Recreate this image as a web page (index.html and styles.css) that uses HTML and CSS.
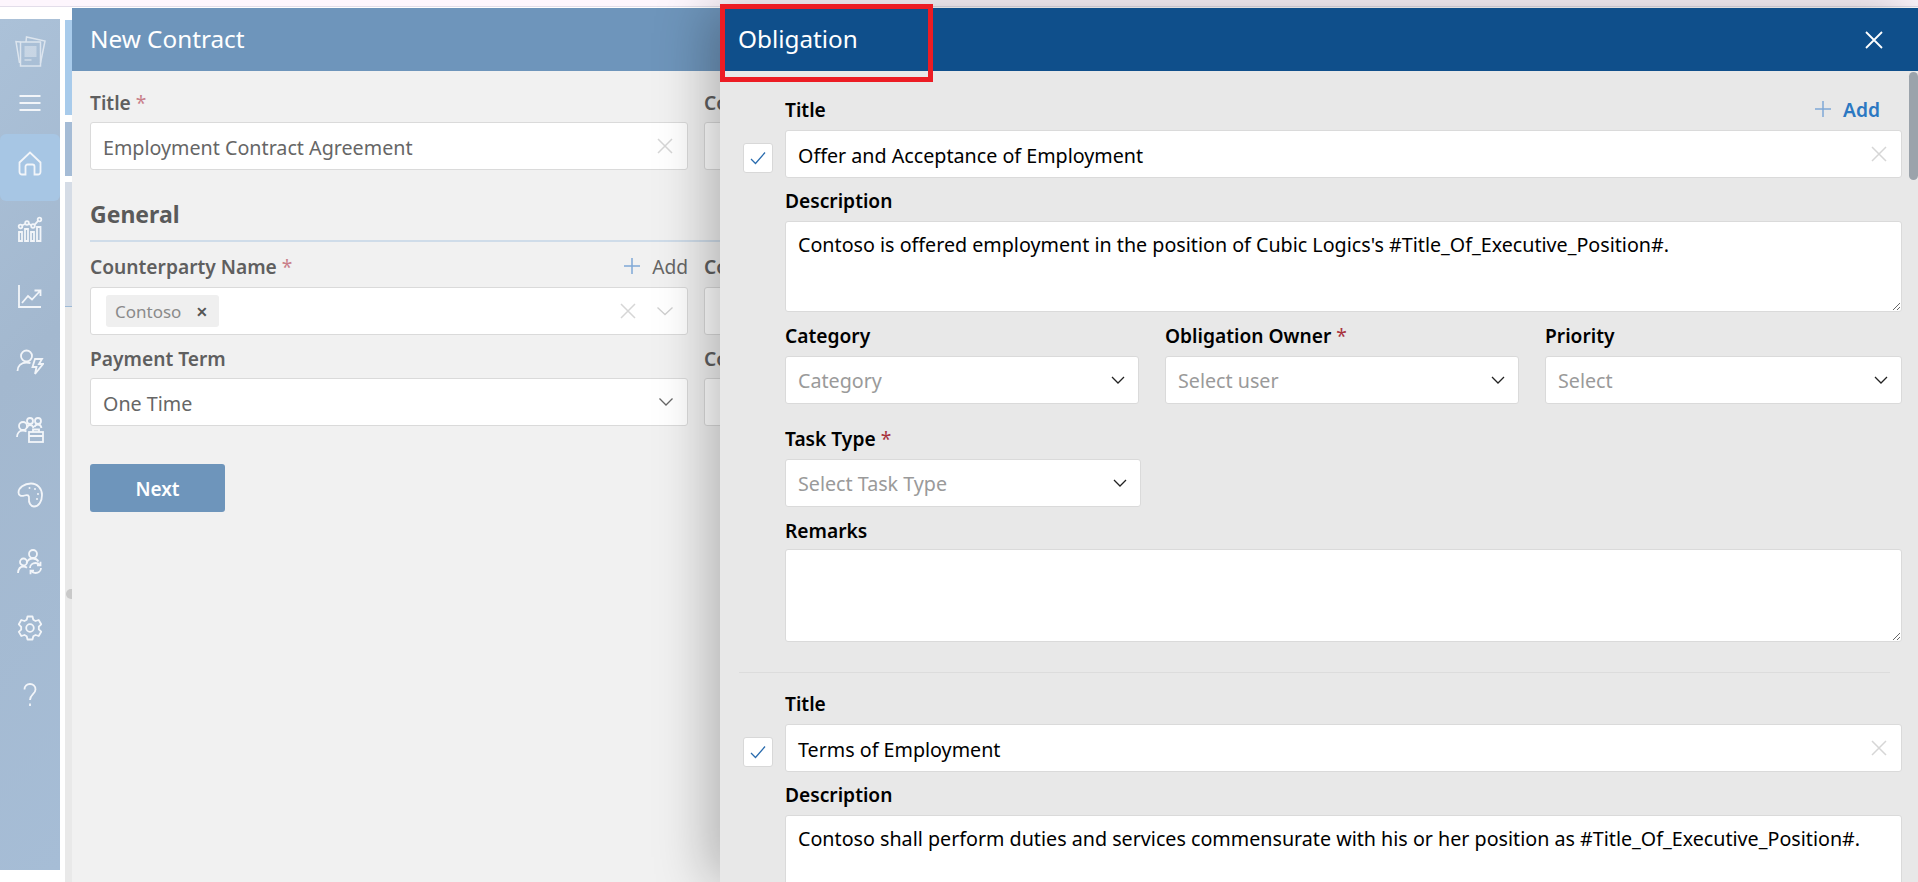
FILE: index.html

```html
<!DOCTYPE html>
<html lang="en">
<head>
    <meta charset="UTF-8">
    <meta name="viewport" content="width=device-width, initial-scale=1.0">
    <title>New Contract - Obligation</title>
    <link rel="stylesheet" href="styles.css">
</head>
<body>

<div class="topstrip"></div>

<div class="app">
    <nav class="sidebar">
        <div class="nav-logo">
            <svg class="ico-soft" width="32" height="32" viewBox="0 0 32 32">
                <path d="M6.500 6L2 5.500l3.500 21.500"/>
                <path d="M12 6l.500-5L31 5l-4.500 22"/>
                <rect x="6.500" y="6" width="20" height="24"/>
                <path class="fillbars" d="M10.500 10h12v11h-12zM10.500 23h7v2h-7z"/>
            </svg>
        </div>
        <div class="nav-item nav-menu">
            <svg width="24" height="18" viewBox="0 0 24 18"><path d="M1.500 2h21M1.500 9h21M1.500 16h21"/></svg>
        </div>
        <div class="nav-item active">
            <svg width="26" height="26" viewBox="0 0 26 26"><path d="M2.500 12.500L13 2.500l10.500 10v9.500a2.500 2.500 0 0 1-2.500 2.500h-3.500v-8a2 2 0 0 0-2-2h-5a2 2 0 0 0-2 2v8H5a2.500 2.500 0 0 1-2.500-2.500z"/></svg>
        </div>
        <div class="nav-item">
            <svg width="26" height="26" viewBox="0 0 26 26"><path d="M2 16h3v9H2zM8 13h3v12H8zM14 16h3v9h-3zM20 11h3.500v14H20z"/><circle cx="3.500" cy="10.500" r="1.800"/><circle cx="10" cy="7" r="1.800"/><circle cx="16" cy="10" r="1.800"/><circle cx="22.500" cy="3.500" r="1.800"/><path d="M5 9.500l3.500-1.800M11.700 7.800l2.600 1.400M17.500 8.800l3.600-4"/></svg>
        </div>
        <div class="nav-item">
            <svg width="26" height="26" viewBox="0 0 26 26"><path d="M2 2v22h22M5 20l6-7 4 3.500L23 8M17.500 7.500h6v5.500"/></svg>
        </div>
        <div class="nav-item">
            <svg width="28" height="28" viewBox="0 0 28 28"><circle cx="10.500" cy="8" r="5.500"/><path d="M1.500 23c0-5 3.500-8.500 9-8.500 1.500 0 3 .3 4 .8"/><path d="M19 11h7l-3 5h4l-8 10 1.500-7h-4z"/></svg>
        </div>
        <div class="nav-item">
            <svg width="28" height="28" viewBox="0 0 28 28"><circle cx="7" cy="11" r="4"/><path d="M1 22c0-4 2.500-6.500 6-6.500 1.500 0 2.500.4 3.500 1"/><circle cx="14" cy="6" r="3"/><circle cx="22" cy="6" r="3"/><path d="M11 13c.5-2 1.500-3 3-3s3 1 3.500 3M18.500 12c.5-1.500 2-2.500 3.500-2.500s3 1 3.500 3.500"/><rect x="13" y="17" width="14" height="10"/><path d="M17 17v-2.500h6V17M13 21h14M20 20v2"/></svg>
        </div>
        <div class="nav-item">
            <svg width="26" height="26" viewBox="0 0 26 26"><path d="M14 1.500C7 1.500 1.500 6 1.500 10.500c0 3.500 3 4 6 3s5-.5 4.500 3.500c-.5 3.500 1.500 7.500 5 7.500 5 0 8-5.500 8-11.500C25 6.500 20.500 1.500 14 1.500z"/><circle class="dot" cx="12.500" cy="6" r="1"/><circle class="dot" cx="18" cy="7" r="1"/><circle class="dot" cx="21" cy="12" r="1"/><circle class="dot" cx="20" cy="17" r="1"/></svg>
        </div>
        <div class="nav-item">
            <svg width="26" height="26" viewBox="0 0 26 26"><circle cx="16" cy="5" r="4"/><path d="M9.500 14c1-3 3.500-4.500 6.500-4.500 2.500 0 4.500 1.200 5.500 3"/><circle cx="6.500" cy="13" r="3.500"/><path d="M1 24c.3-4 2.500-6.500 5.500-6.500 1.500 0 2.500.5 3.500 1.200"/><path d="M13 19c0-3 2.500-5 5.500-5 1.800 0 3.300.8 4.300 2M24 19c0 3-2.500 5-5.500 5-1.800 0-3.300-.8-4.300-2M23.500 12.800v3.500H20M13.500 25.200v-3.500H17"/></svg>
        </div>
        <div class="nav-item">
            <svg width="26" height="26" viewBox="0 0 26 26"><path d="M10.500 1.500h5l.8 3.300 2.200 1.200 3.200-1 2.500 4.300-2.400 2.300v2.800l2.400 2.300-2.500 4.300-3.200-1-2.200 1.200-.8 3.300h-5l-.8-3.300-2.200-1.200-3.200 1L1.800 16.900l2.400-2.300v-2.800L1.800 9.300l2.500-4.300 3.200 1 2.200-1.200z" stroke-linejoin="round"/><circle cx="13" cy="13" r="3.800"/></svg>
        </div>
        <div class="nav-item">
            <svg width="14" height="24" viewBox="0 0 14 24"><path d="M1.500 6.500C1.500 3 4 1 7 1s5.500 2 5.500 5.500c0 4.500-5.500 5-5.500 10.500"/><path d="M7 20.500v2.500"/></svg>
        </div>
    </nav>

    <div class="backdrop">
        <div class="back-a"></div>
        <div class="back-b"></div>
        <div class="back-c"></div>
        <div class="back-d"></div>
        <div class="back-thumb"></div>
    </div>
</div>

<!-- first drawer, mostly covered by the obligation one -->
<section class="drawer drawer-contract">
    <header class="drawer-head">New Contract</header>
    <div class="contract-body">
        <div class="contract-col">
            <div class="label-row first-row"><label>Title <span class="req">*</span></label></div>
            <div class="field">
                <span class="field-text">Employment Contract Agreement</span>
                <svg class="x-icon" width="16" height="16" viewBox="0 0 16 16"><path d="M1 1l14 14M15 1L1 15"/></svg>
            </div>

            <h2 class="section-title">General</h2>

            <div class="label-row general-row">
                <label>Counterparty Name <span class="req">*</span></label>
                <span class="add-link">
                    <svg width="18" height="18" viewBox="0 0 18 18"><path d="M9 1v16M1 9h16"/></svg>Add
                </span>
            </div>
            <div class="field field-chips">
                <span class="chip">Contoso <b class="chip-x">&#10005;</b></span>
                <span class="field-text"></span>
                <svg class="x-icon x-gap" width="16" height="16" viewBox="0 0 16 16"><path d="M1 1l14 14M15 1L1 15"/></svg>
                <svg class="chev chev-light" width="18" height="10" viewBox="0 0 18 10"><path d="M1.500 1.500L9 8.500l7.500-7"/></svg>
            </div>

            <div class="label-row term-row"><label>Payment Term</label></div>
            <div class="field">
                <span class="field-text">One Time</span>
                <svg class="chev chev-mid" width="16" height="10" viewBox="0 0 16 10"><path d="M1.500 1.500L8 8l6.500-6.500"/></svg>
            </div>

            <button class="btn-next">Next</button>
        </div>
        <div class="contract-col2">
            <div class="label-row first-row"><label>Co</label></div>
            <div class="field"></div>
            <div class="spacer-general"></div>
            <div class="label-row general-row"><label>Co</label></div>
            <div class="field"></div>
            <div class="label-row term-row"><label>Co</label></div>
            <div class="field"></div>
        </div>
    </div>
</section>

<section class="drawer drawer-obligation">
    <header class="drawer-head">
        <span>Obligation</span>
        <svg class="close-icon" width="18" height="18" viewBox="0 0 18 18"><path d="M1 1l16 16M17 1L1 17"/></svg>
    </header>
    <div class="callout"></div>

    <div class="ob-scroll">
        <div class="ob-thumb"></div>

        <div class="ob-item">
            <div class="ob-check">
                <span class="checkbox"><svg width="16" height="14" viewBox="0 0 16 14"><path d="M1 8l4.500 4.500L15 1.500"/></svg></span>
            </div>
            <div class="ob-fields">
                <div class="label-row ob-label">
                    <label>Title</label>
                    <span class="add-link">
                        <svg width="18" height="18" viewBox="0 0 18 18"><path d="M9 1v16M1 9h16"/></svg>Add
                    </span>
                </div>
                <div class="field">
                    <span class="field-text">Offer and Acceptance of Employment</span>
                    <svg class="x-icon" width="16" height="16" viewBox="0 0 16 16"><path d="M1 1l14 14M15 1L1 15"/></svg>
                </div>
                <div class="label-row ob-label"><label>Description</label></div>
                <textarea class="area area-desc" readonly>Contoso is offered employment in the position of Cubic Logics's #Title_Of_Executive_Position#.</textarea>

                <div class="ob-row">
                    <div class="ob-cell">
                        <div class="label-row ob-label"><label>Category</label></div>
                        <div class="field">
                            <span class="field-text ph">Category</span>
                            <svg class="chev" width="14" height="8" viewBox="0 0 14 8"><path d="M1 1l6 6 6-6"/></svg>
                        </div>
                    </div>
                    <div class="ob-cell">
                        <div class="label-row ob-label"><label>Obligation Owner <span class="req">*</span></label></div>
                        <div class="field">
                            <span class="field-text ph">Select user</span>
                            <svg class="chev" width="14" height="8" viewBox="0 0 14 8"><path d="M1 1l6 6 6-6"/></svg>
                        </div>
                    </div>
                    <div class="ob-cell">
                        <div class="label-row ob-label"><label>Priority</label></div>
                        <div class="field">
                            <span class="field-text ph">Select</span>
                            <svg class="chev" width="14" height="8" viewBox="0 0 14 8"><path d="M1 1l6 6 6-6"/></svg>
                        </div>
                    </div>
                </div>

                <div class="task-cell">
                    <div class="label-row ob-label"><label>Task Type <span class="req">*</span></label></div>
                    <div class="field">
                        <span class="field-text ph">Select Task Type</span>
                        <svg class="chev" width="14" height="8" viewBox="0 0 14 8"><path d="M1 1l6 6 6-6"/></svg>
                    </div>
                </div>

                <div class="label-row ob-label remarks-label"><label>Remarks</label></div>
                <textarea class="area area-remarks" readonly></textarea>
            </div>
        </div>

        <hr class="ob-divider">

        <div class="ob-item">
            <div class="ob-check">
                <span class="checkbox"><svg width="16" height="14" viewBox="0 0 16 14"><path d="M1 8l4.500 4.500L15 1.500"/></svg></span>
            </div>
            <div class="ob-fields">
                <div class="label-row ob-label"><label>Title</label></div>
                <div class="field">
                    <span class="field-text">Terms of Employment</span>
                    <svg class="x-icon" width="16" height="16" viewBox="0 0 16 16"><path d="M1 1l14 14M15 1L1 15"/></svg>
                </div>
                <div class="label-row ob-label"><label>Description</label></div>
                <textarea class="area area-desc" readonly>Contoso shall perform duties and services commensurate with his or her position as #Title_Of_Executive_Position#.</textarea>
            </div>
        </div>
    </div>
</section>

</body>
</html>
```

FILE: styles.css

```css
* {
    box-sizing: border-box;
}
html, body {
    height: 100%;
}
body {
    margin: 0;
    overflow: hidden;
    background-color: #fff;
    font-family: "Noto Sans", "Open Sans", Arial, sans-serif;
    font-size: 19.700px;
    color: #000;
}
.topstrip {
    height: 7px;
    background-color: #fdf6fd;
    border-bottom: 1px solid #e3deea;
}

/* app behind the drawers */
.app {
    display: flex;
    padding-top: 12px;
    height: 875px;
}
.sidebar {
    width: 60px;
    height: 851px;
    flex: none;
    display: flex;
    flex-direction: column;
    align-items: stretch;
    background: linear-gradient(135deg, #abc1d8 0%, #a3b8cf 40%, #a6bdd6 100%);
}
.sidebar svg {
    fill: none;
    stroke: #f2f5f9;
    stroke-width: 1.800;
}
.nav-logo {
    height: 66px;
    display: flex;
    align-items: center;
    justify-content: center;
    flex: none;
}
.sidebar .ico-soft {
    opacity: .7;
    stroke-width: 1.500;
}
.sidebar svg .fillbars {
    fill: rgba(255, 255, 255, .5);
    stroke: none;
}
.sidebar svg .dot {
    fill: #f2f5f9;
    stroke: none;
}
.nav-item {
    height: 66.500px;
    padding-bottom: 9px;
    flex: none;
    display: flex;
    align-items: center;
    justify-content: center;
}
.nav-menu {
    height: 49px;
    padding-bottom: 13px;
}
.nav-item.active {
    background-color: #a7c6e4;
    border-radius: 6px;
}
.backdrop {
    position: relative;
    flex: 1;
    background-color: #fff;
}
.back-a, .back-b, .back-c, .back-d {
    position: absolute;
    left: 5px;
    width: 12px;
}
.back-a {
    top: 1px;
    height: 95px;
    background-color: #a8cbeb;
}
.back-b {
    top: 103px;
    height: 54px;
    background-color: #a5bcd6;
}
.back-c {
    top: 163px;
    height: 125px;
    background-color: #d5dce6;
    border-bottom: 1px solid #9ebad6;
}
.back-d {
    top: 288px;
    height: 600px;
    background-color: #e9e9e9;
}
.back-thumb {
    position: absolute;
    left: 6px;
    top: 570px;
    width: 12px;
    height: 10px;
    border-radius: 5px;
    background-color: #c9c9c9;
}

/* drawers */
.drawer {
    position: absolute;
    top: 8px;
    bottom: 0;
    right: 0;
}
.drawer-contract {
    left: 72px;
    background-color: #f1f1f1;
    color: #666;
}
.drawer-obligation {
    left: 720px;
    background-color: #e8e8e8;
    box-shadow: -12px 0 50px rgba(0, 0, 0, .26);
}
.drawer-head {
    height: 63px;
    display: flex;
    align-items: center;
    justify-content: space-between;
    padding: 0 18px 2px;
    font-size: 24.300px;
    color: #fff;
}
.drawer-contract .drawer-head {
    background-color: #6e95bb;
}
.drawer-obligation .drawer-head {
    background-color: #0f4f8b;
    padding-left: 18px;
    padding-right: 35px;
}
.close-icon {
    fill: none;
    stroke: #fff;
    stroke-width: 1.800;
    margin-top: 2px;
}
.callout {
    position: absolute;
    left: 0;
    top: -4px;
    width: 213px;
    height: 78px;
    border: 5px solid #ec1c24;
}

/* shared form bits */
label {
    font-size: 19.200px;
    font-weight: 600;
    white-space: nowrap;
}
.drawer-contract label {
    color: #5f5f5f;
}
.req {
    color: #a8333d;
    font-weight: 400;
}
.drawer-contract .req {
    color: #c9808a;
}
.label-row {
    display: flex;
    align-items: center;
    justify-content: space-between;
}
.field {
    height: 48px;
    display: flex;
    align-items: center;
    gap: 10px;
    padding: 0 12px;
    background-color: #fff;
    border: 1px solid #dadada;
    border-radius: 3px;
}
.field-text {
    flex: 1;
    padding-top: 2px;
    white-space: nowrap;
}
.ph {
    padding-top: 0;
    color: #9a9a9a;
}
.x-icon {
    fill: none;
    stroke: #d6d6d6;
    stroke-width: 1.500;
    flex: none;
    margin-right: 2px;
}
.x-gap {
    margin-right: 14px;
}
.chev {
    fill: none;
    stroke: #222;
    stroke-width: 1.300;
    flex: none;
    margin-right: 1px;
}
.chev-light {
    stroke: #cfcfcf;
}
.chev-mid {
    stroke: #666;
}
.add-link {
    display: flex;
    align-items: center;
    gap: 11px;
    font-size: 19.200px;
}
.add-link svg {
    fill: none;
    stroke: #7fa8d6;
    stroke-width: 1.500;
}

/* new contract form */
.contract-body {
    display: flex;
    gap: 16px;
    padding: 13px 0 0 18px;
    overflow: hidden;
    height: 600px;
}
.contract-col {
    width: 598px;
    flex: none;
}
.contract-col2 {
    flex: none;
    width: 500px;
}
.first-row {
    height: 38px;
    padding-bottom: 2px;
}
.general-row {
    height: 45px;
    padding-top: 3px;
}
.term-row {
    height: 43px;
    padding-top: 3px;
}
.section-title {
    margin: 0;
    height: 72px;
    padding-top: 29px;
    line-height: 30px;
    font-size: 23px;
    font-weight: 700;
    color: #5a5a5a;
    border-bottom: 2px solid #cfdce9;
    width: 640px;
}
.spacer-general {
    height: 72px;
}
.field-chips {
    gap: 6px;
    padding-left: 15px;
}
.chip {
    flex: none;
    display: flex;
    align-items: center;
    justify-content: space-between;
    width: 113px;
    height: 32px;
    padding: 0 11px 0 9px;
    background-color: #efefef;
    border-radius: 3px;
    font-size: 17px;
    color: #8a8a8a;
}
.chip-x {
    font-size: 14px;
    color: #555;
}
.btn-next {
    display: block;
    width: 135px;
    height: 48px;
    margin-top: 38px;
    padding-top: 2px;
    background-color: #6e95bb;
    color: #fff;
    border: 0;
    border-radius: 3px;
    font: 600 19px "Noto Sans", Arial, sans-serif;
}

/* obligation list */
.ob-scroll {
    position: relative;
    padding: 16px 16px 0 23px;
}
.ob-thumb {
    position: absolute;
    right: 0;
    top: 1px;
    width: 9px;
    height: 108px;
    border-radius: 5px;
    background-color: #9ba3ab;
}
.ob-item {
    display: flex;
    gap: 12px;
}
.ob-check {
    width: 30px;
    flex: none;
    padding-top: 56px;
}
.checkbox {
    display: flex;
    align-items: center;
    justify-content: center;
    width: 30px;
    height: 30px;
    background-color: #fff;
    border: 1px solid #d8d8d8;
    border-radius: 3px;
}
.checkbox svg {
    fill: none;
    stroke: #2a6cae;
    stroke-width: 1.300;
}
.ob-fields {
    flex: 1;
    min-width: 0;
}
.ob-label {
    height: 43px;
    padding-top: 1px;
}
.ob-label .add-link {
    color: #2b78c2;
    font-weight: 600;
    margin-right: 22px;
}
.area {
    display: block;
    width: 100%;
    padding: 9px 12px;
    background-color: #fff;
    border: 1px solid #dadada;
    border-radius: 3px;
    font: 19.700px "Noto Sans", Arial, sans-serif;
    color: #000;
    outline: none;
}
.area-desc {
    height: 91px;
}
.area-remarks {
    height: 93px;
}
.ob-row {
    display: grid;
    grid-template-columns: 354px 354px 1fr;
    gap: 26px;
    margin-top: 1px;
}
.task-cell {
    width: 356px;
    margin-top: 12px;
}
.remarks-label {
    height: 42px;
    padding-top: 4px;
}
.ob-divider {
    margin: 30px 12px 8px -4px;
    border: 0;
    border-top: 1px solid #dcdcdc;
}
```
